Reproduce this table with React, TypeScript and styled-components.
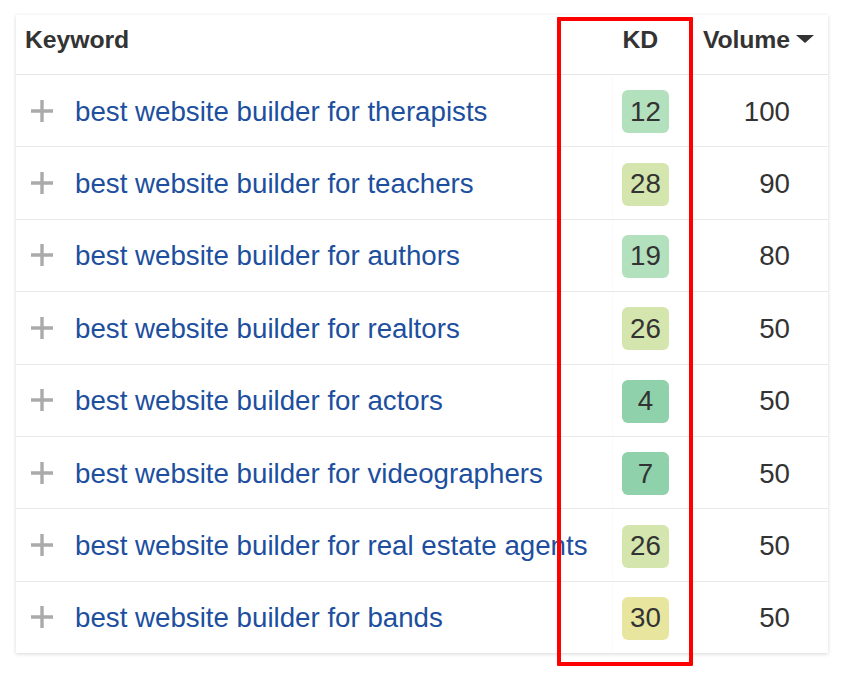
import React from "react";
import styled, { createGlobalStyle } from "styled-components";

const Global = createGlobalStyle`
  html, body { margin: 0; padding: 0; background: #ffffff; }
  body { font-family: "Liberation Sans", Arial, Helvetica, sans-serif; }
`;

const Page = styled.div`
  padding: 15px 20px 20px 16px;
  min-height: 640px;
`;

const Frame = styled.div`
  position: relative;
  width: 812px;
`;

const Card = styled.div`
  background: #fff;
  box-shadow: 0 1px 4px rgba(0, 0, 0, 0.16);
  width: 812px;
`;

const HeaderRow = styled.div`
  display: grid;
  grid-template-columns: 596px 78px 138px;
  height: 59px;
  border-bottom: 1.5px solid #e7e7e7;
  align-items: center;
`;

const HeadCell = styled.div<{ $align?: "left" | "right"; $pr?: number; $pl?: number }>`
  font-size: 24.8px;
  font-weight: 700;
  color: #333333;
  text-align: ${(p) => p.$align ?? "left"};
  padding-left: ${(p) => p.$pl ?? 0}px;
  padding-right: ${(p) => p.$pr ?? 0}px;
  padding-bottom: 9px;
  white-space: nowrap;
  letter-spacing: -0.1px;
`;

const Caret = styled.span`
  display: inline-block;
  width: 0;
  height: 0;
  border-left: 9px solid transparent;
  border-right: 9px solid transparent;
  border-top: 8px solid #333;
  margin-left: 6px;
  vertical-align: 5px;
`;

const Row = styled.div`
  display: grid;
  grid-template-columns: 596px 78px 138px;
  height: 71.4px;
  align-items: center;
  border-bottom: 1px solid #e9e9e9;
  &:last-child {
    border-bottom: none;
  }
`;

const KeywordCell = styled.div`
  display: flex;
  align-items: center;
  gap: 21px;
  padding-left: 14px;
  height: 100%;
`;

const PlusIcon = styled.svg`
  width: 24px;
  height: 24px;
  flex: none;
`;

const Link = styled.span`
  font-size: 27.7px;
  color: #1d4f9e;
  white-space: nowrap;
  position: relative;
  top: 1px;
`;

const KdCell = styled.div`
  display: flex;
  justify-content: flex-end;
  align-items: center;
  padding-right: 21px;
  height: 100%;
  border-left: 1px solid #fafafa;
`;

const Badge = styled.div<{ $bg: string }>`
  width: 47px;
  height: 43px;
  border-radius: 6px;
  background: ${(p) => p.$bg};
  color: #333;
  font-size: 27.7px;
  display: flex;
  align-items: center;
  justify-content: center;
  position: relative;
  top: 1px;
`;

const VolCell = styled.div`
  text-align: right;
  padding-right: 38px;
  font-size: 27.7px;
  color: #333;
  position: relative;
  top: 1px;
`;

const Highlight = styled.div`
  position: absolute;
  left: 541px;
  top: 2px;
  width: 128px;
  height: 641px;
  border: 4px solid #ff0000;
  border-radius: 1px;
  pointer-events: none;
`;

const colorFor = (kd: number) => {
  if (kd <= 9) return "#8fd1ab";
  if (kd <= 20) return "#b3e0bd";
  if (kd <= 28) return "#d4e5ae";
  return "#e8e69e";
};

const rows = [
  { kw: "best website builder for therapists", kd: 12, vol: 100 },
  { kw: "best website builder for teachers", kd: 28, vol: 90 },
  { kw: "best website builder for authors", kd: 19, vol: 80 },
  { kw: "best website builder for realtors", kd: 26, vol: 50 },
  { kw: "best website builder for actors", kd: 4, vol: 50 },
  { kw: "best website builder for videographers", kd: 7, vol: 50 },
  { kw: "best website builder for real estate agents", kd: 26, vol: 50 },
  { kw: "best website builder for bands", kd: 30, vol: 50 },
];

const Plus = () => (
  <PlusIcon viewBox="0 0 24 24">
    <path d="M12 1v22M1 12h22" stroke="#aaaaaa" strokeWidth="3.4" fill="none" />
  </PlusIcon>
);

export default function App() {
  return (
    <Page>
      <Global />
      <Frame>
        <Card>
          <HeaderRow>
            <HeadCell $pl={9}>Keyword</HeadCell>
            <HeadCell $align="right" $pr={32}>KD</HeadCell>
            <HeadCell $align="right" $pr={14}>
              Volume<Caret />
            </HeadCell>
          </HeaderRow>
          {rows.map((r) => (
            <Row key={r.kw}>
              <KeywordCell>
                <Plus />
                <Link>{r.kw}</Link>
              </KeywordCell>
              <KdCell>
                <Badge $bg={colorFor(r.kd)}>{r.kd}</Badge>
              </KdCell>
              <VolCell>{r.vol}</VolCell>
            </Row>
          ))}
        </Card>
        <Highlight />
      </Frame>
    </Page>
  );
}
